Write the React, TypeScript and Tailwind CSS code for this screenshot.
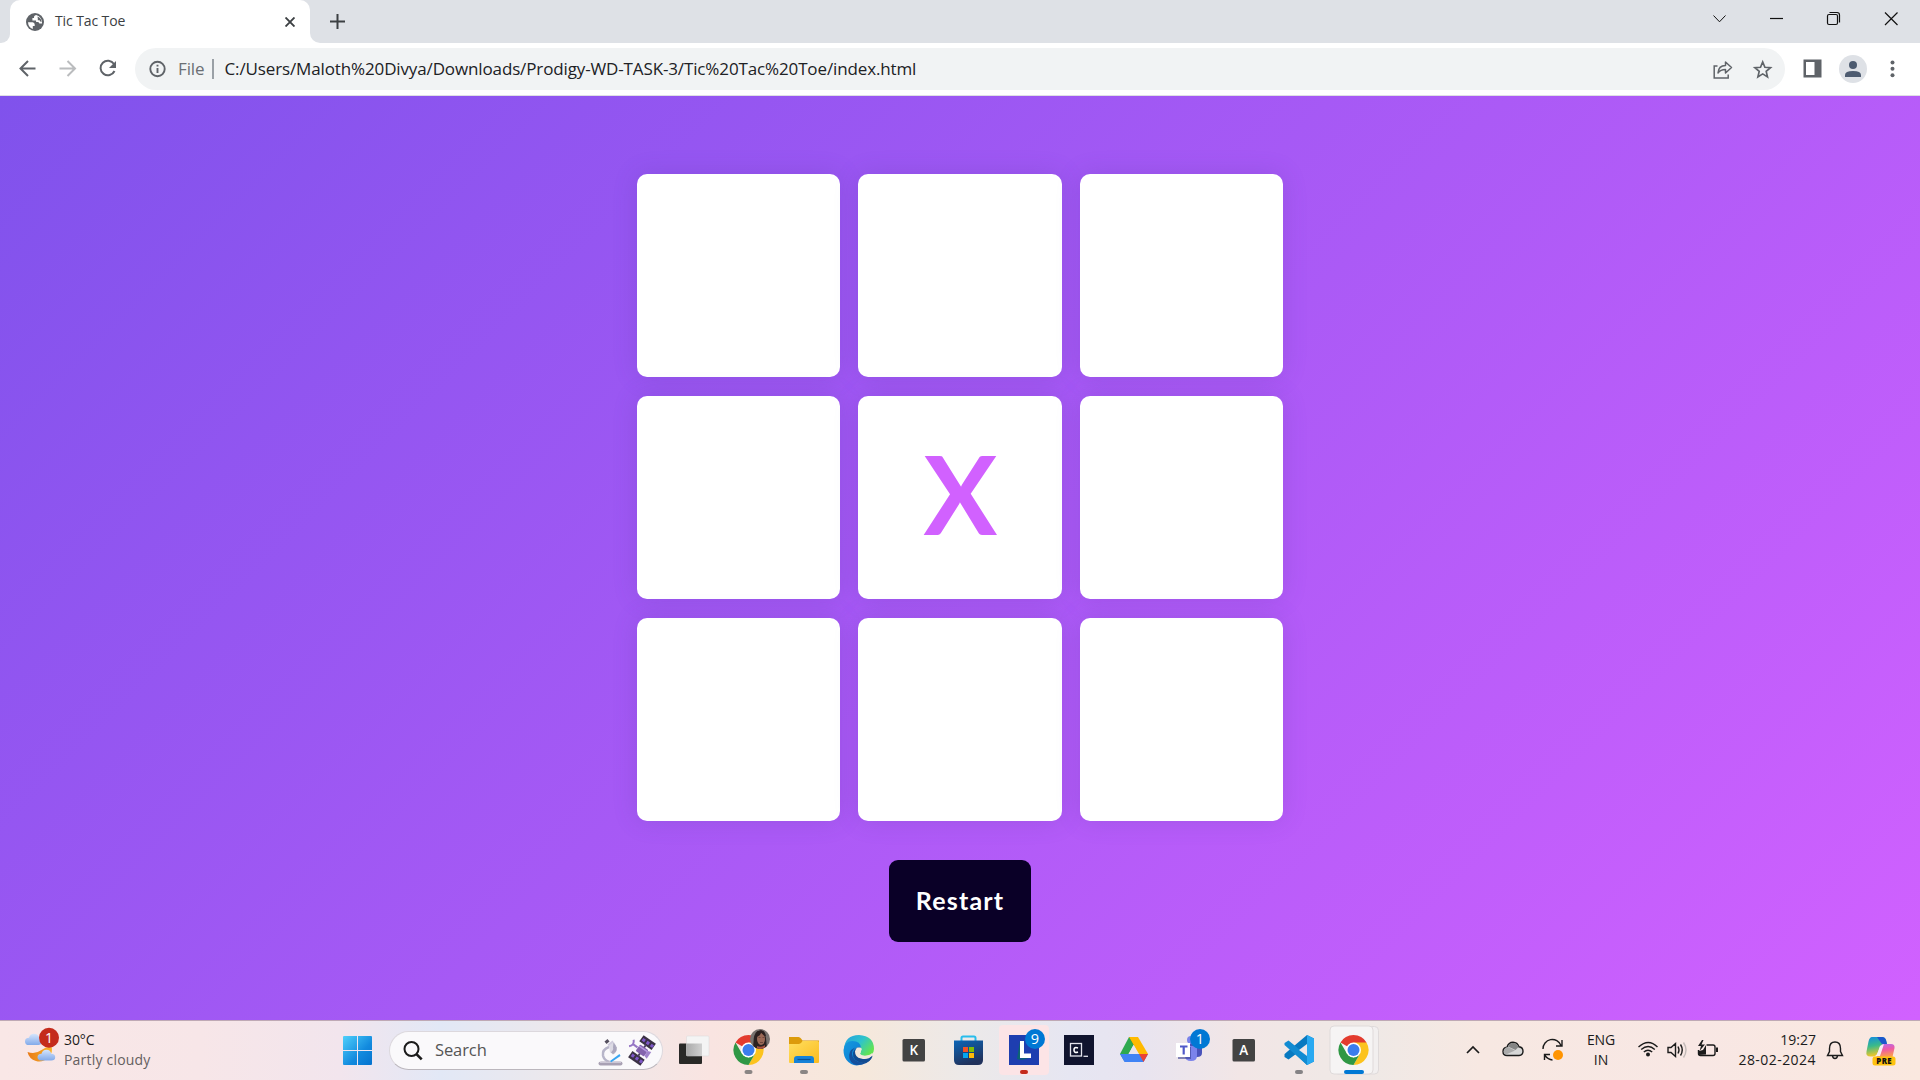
import React from "react";

const ui = "font-['Open_Sans','Noto_Sans',sans-serif]";

function Cell({ children }: { children?: React.ReactNode }) {
  return (
    <div className="flex items-center justify-center rounded-[10px] bg-white text-[#d161ff] shadow-[0_0_24px_rgba(84,56,160,0.2)]">
      {children}
    </div>
  );
}

function TabStrip() {
  return (
    <div className="flex h-[43px] bg-[#dee1e6]">
      <div className="flex w-[10px] bg-white">
        <div className="flex-1 rounded-br-[9px] bg-[#dee1e6]" />
      </div>
      <div className="flex w-[300px] bg-[#dee1e6]">
        <div className="flex w-full items-center rounded-t-[10px] bg-white pl-4 pr-[15px]">
          <svg width="18" height="18" viewBox="0 0 18 18">
            <circle cx="9" cy="9" r="9" fill="#5f6368" />
            <path d="M2 9.200h4.600q2.100.2 2.100 2.300v1.400H6.800V16Q2.300 14.200 2 9.200zM10.100 2q-2.700 1-2 3.100h-1.700v2.300h3.700v1.600h1.700q1.500 0 1.500 1.600h2.700Q16.500 4.200 10.100 2z" fill="#fff" />
            <path d="M11.500 3.500Q15.500 5 15.600 9q-1.600-.2-2-1.700h-1.800V5.400z" fill="#5f6368" />
          </svg>
          <span className="ml-[11px] flex-1 pb-[3px] text-[14px] tracking-[-0.1px] text-[#3c4043]">Tic Tac Toe</span>
          <svg width="10" height="10" viewBox="0 0 10 10" stroke="#3c4043" strokeWidth="1.900">
            <path d="M.5.5l9 9M9.500.5l-9 9" />
          </svg>
        </div>
      </div>
      <div className="flex w-5 bg-white">
        <div className="flex-1 rounded-bl-[10px] bg-[#dee1e6]" />
      </div>
      <svg width="16" height="43" viewBox="0 0 16 43" stroke="#3c4043" strokeWidth="2">
        <path d="M0 21.500h15M7.500 14v15" />
      </svg>
      <div className="flex-1" />
      <svg width="210" height="43" viewBox="0 0 210 43" fill="none" stroke="#111" strokeWidth="1.200">
        <path d="M3.500 15.500l6 6.300 6-6.300" strokeWidth="1" />
        <path d="M60 18.500h13" />
        <rect x="117.500" y="14.500" width="10" height="10" rx="1.500" />
        <path d="M119.500 12.500h7.500q2.500 0 2.500 2.500v7.500" />
        <path d="M175 12.500l12.500 12.500M187.500 12.500L175 25" />
      </svg>
    </div>
  );
}

function Toolbar() {
  return (
    <div className="flex h-[53px] items-center border-b border-[#dfdfe4] bg-white pb-px">
      <svg width="135" height="52" viewBox="0 0 135 52" fill="none" strokeWidth="2">
        <path d="M35.500 25.500H20.500M28 18l-7.500 7.500L28 33" stroke="#5f6368" />
        <path d="M59.500 25.500h15M67.500 18l7.500 7.500-7.500 7.500" stroke="#babcbe" />
        <path d="M114 21A7.300 7.300 0 1 0 114.500 28" stroke="#5f6368" />
        <path d="M116 18v7h-7z" fill="#5f6368" />
      </svg>
      <div className="flex h-[42px] w-[1650px] items-center rounded-full bg-[#f1f3f4]">
        <svg width="43" height="42" viewBox="0 0 43 42" fill="none" stroke="#5f6368" strokeWidth="1.900">
          <circle cx="22.500" cy="21" r="7.200" />
          <path d="M22.500 20v5M22.500 16.800v1.800" />
        </svg>
        <span className="w-[34px] text-[17px] tracking-[-0.1px] text-[#6b6f74]">File</span>
        <div className="h-5 w-[1.500px] bg-[#9aa0a6]" />
        <span className="ml-[11px] flex-1 whitespace-nowrap text-[17px] tracking-[-0.130px] text-[#202124]">
          C:/Users/Maloth%20Divya/Downloads/Prodigy-WD-TASK-3/Tic%20Tac%20Toe/index.html
        </span>
        <svg width="80" height="42" viewBox="-0.5 -0.5 80 42" fill="none" stroke="#5f6368" strokeWidth="1.500">
          <path d="M12 17.500H8.700V29.500h14V26" />
          <path d="M12.500 24.500q.5-7.500 7.500-7.500v-3.500l6 5.500-6 5.500v-3.400q-5 0-7.500 3.400z" strokeLinejoin="round" />
          <path d="M57.200 13.500l2.200 5.300 5.600.4-4.300 3.700 1.300 5.500-4.800-3-4.800 3 1.300-5.500-4.300-3.700 5.600-.4z" strokeWidth="1.700" />
        </svg>
      </div>
      <svg width="135" height="52" viewBox="0 0 135 52" fill="#5f6368">
        <path fillRule="evenodd" d="M18.500 16.500h18v18h-18zM21 19v13h8.500V19z" />
        <circle cx="68" cy="26" r="14" fill="#dee1e6" />
        <circle cx="68" cy="22" r="4" fill="#4d5b70" />
        <path d="M60 34v-2q0-4 8-4t8 4v2z" fill="#4d5b70" />
        <circle cx="107.500" cy="19.500" r="2" />
        <circle cx="107.500" cy="25.800" r="2" />
        <circle cx="107.500" cy="32.200" r="2" />
      </svg>
    </div>
  );
}

function AppIcon({ children }: { children: React.ReactNode }) {
  return (
    <svg width="55" height="59" viewBox="0 1 55 59" className="shrink-0">
      {children}
    </svg>
  );
}

function ChromeMark() {
  return (
    <g>
      <path d="M27.500 30L14.500 22.500A15 15 0 0 1 40.500 22.500z" fill="#e33b2e" />
      <path d="M27.500 30V22.500H40.500A15 15 0 0 1 27.500 45L34 33.700z" fill="#fcc31e" />
      <path d="M14.500 22.500L21 33.700 27.500 37.500 34 33.700 27.500 45A15 15 0 0 1 14.500 22.500z" fill="#2f9744" />
      <circle cx="27.500" cy="30" r="7.500" fill="#fff" />
      <circle cx="27.500" cy="30" r="6" fill="#3b7ded" />
    </g>
  );
}

function Letter({ c }: { c: string }) {
  return (
    <AppIcon>
      <rect x="16.500" y="19" width="22.500" height="22.500" rx="1.500" fill="#434343" />
      <text x="27.700" y="34.800" textAnchor="middle" fontSize="13.500" fontWeight="600" fill="#fff">
        {c}
      </text>
    </AppIcon>
  );
}

function Weather() {
  return (
    <svg width="64" height="59" viewBox="0 1 64 59">
      <defs>
        <linearGradient id="cl" x2="0" y2="1">
          <stop stopColor="#d5e5fc" />
          <stop offset="1" stopColor="#82aaea" />
        </linearGradient>
        <linearGradient id="moon" x2="1" y2="0">
          <stop stopColor="#e87a18" />
          <stop offset="1" stopColor="#f9b52c" />
        </linearGradient>
      </defs>
      <path d="M27.500 32q8 2.500 14-2 5-4 10-3.500 2 6-3 11-6 5.500-12.500 3.500-7-2-8.500-9z" fill="url(#moon)" />
      <path d="M29 25q-4 0-4-3.600 0-3.400 4-3.600 1-4 5-4 4.500 0 5.500 5 4 6.200-1 6.200z" fill="url(#cl)" />
      <path d="M41 40.500q-3.700-.5-3.500-3.800.5-3 4-3 1-4 5-4t4.700 4q4 .3 4 3.500t-4 3.300z" fill="url(#cl)" />
      <circle cx="49" cy="17.700" r="10" fill="#c42b1c" />
      <text x="49" y="22.700" textAnchor="middle" fontSize="14" fill="#fff">1</text>
    </svg>
  );
}

function SearchBox() {
  return (
    <div className="flex h-[39px] w-[274px] shrink-0 items-center rounded-full border border-[#dcd8dd] border-b-[#bbb7bd] bg-[#faf9fb]">
      <svg width="45" height="37" viewBox="0 0 45 37" fill="none" stroke="#1b1b1b" strokeWidth="2">
        <circle cx="21.500" cy="17" r="7" />
        <path d="M26.700 22.300l5 5" strokeWidth="2.600" />
      </svg>
      <span className="flex-1 text-[16.500px] tracking-[-0.1px] text-[#555]">Search</span>
      <svg width="66" height="37" viewBox="-1 -0.5 66 37">
        <path d="M12 14.500q-7 2.500-6 8.500 1 5 6.500 6.500" fill="none" stroke="#b7b5c9" strokeWidth="2.500" />
        <path d="M1.500 31q0-2 3-2h19q2 0 2 2t-2 2h-20q-2 0-2-2z" fill="#a9a1b4" />
        <path d="M3 29.700h21" stroke="#ded9e5" strokeWidth="1" />
        <path d="M13 28.500l9.500-7 1 2-9.300 6.300z" fill="#37a5f2" />
        <path d="M10.500 12l5-4 3.500 5-5 4z" fill="#cfcbdc" />
        <path d="M12 13l5-3.500 2.500 8.500q-3.500 3.500-6.500 2z" fill="#dcdae4" />
        <path d="M16.500 10l3.500 5q0 5-4 7l-2-2q3-3 2-5z" fill="#8f8ba8" opacity=".65" />
        <path d="M7.500 9l3-2.500 2 2.500-3 2.500z" fill="#55505f" />
        <g transform="rotate(35 45 18)">
          <rect x="37.500" y="4.500" width="15" height="7.500" fill="#3a3144" />
          <path d="M39 8.500h3m2 0h3m2 0h3" stroke="#7e58c8" strokeWidth="3.200" />
          <rect x="37.500" y="24" width="15" height="7.500" fill="#3a3144" />
          <path d="M39 27.500h3m2 0h3m2 0h3" stroke="#7e58c8" strokeWidth="3.200" />
          <path d="M44 11h2v14h-2z" fill="#4c3f63" />
          <rect x="40" y="14" width="10" height="8" rx="1" fill="#8464ad" />
          <path d="M40 16h10" stroke="#b79be0" strokeWidth="1.500" />
          <path d="M50 15l3.500-1v8l-3.500-1z" fill="#a184cc" />
          <path d="M39.500 18H34m-2-4q4 4 0 8" stroke="#9575c4" strokeWidth="2" fill="none" />
        </g>
      </svg>
    </div>
  );
}

function Apps() {
  return (
    <div className="ml-[3px] flex">
      <AppIcon>
        <defs>
          <linearGradient id="tv" x2="1"><stop stopColor="#aaa" /><stop offset="1" stopColor="#d0d0d0" /></linearGradient>
        </defs>
        <rect x="13" y="23.500" width="23" height="20.500" rx="1" fill="#292927" />
        <rect x="20.500" y="16" width="22.500" height="20" rx="1" fill="#f4f4f4" stroke="#d9d9d9" strokeWidth=".5" />
        <rect x="20.500" y="23.500" width="15.500" height="12.500" fill="url(#tv)" />
      </AppIcon>
      <AppIcon>
        <ChromeMark />
        <clipPath id="face"><circle cx="39" cy="19" r="10" /></clipPath>
        <g clipPath="url(#face)">
          <rect x="29" y="9" width="20" height="20" fill="#77716e" />
          <path d="M32.500 29q-1-15 4-18 7-1 8.500 7l1 11z" fill="#2b2121" />
          <ellipse cx="40" cy="19" rx="4" ry="6" fill="#9b6957" />
          <path d="M35 17q5-1 5-5 2 4 5 4-1-5-5-6-5 1-5 7z" fill="#2c2020" />
          <path d="M36 26q4 2 8-1v4h-8z" fill="#a65343" />
          <path d="M37.500 17.500h2m2 0h2M39 22.500h3" stroke="#6d473d" />
        </g>
        <rect x="23.500" y="50" width="8" height="4" rx="2" fill="#8a8584" />
      </AppIcon>
      <AppIcon>
        <defs>
          <linearGradient id="fo" x2="1" y2="1"><stop stopColor="#ffdf60" /><stop offset="1" stopColor="#fbbb1e" /></linearGradient>
        </defs>
        <path d="M13 17h9.500q1.500 0 2.500 1.500l1.500 2H43V28H13z" fill="#dc9b0b" />
        <path d="M13 24h10q2 0 3.500-3h15q1.500 0 1.500 1.500v19.500q0 1-1 1H14q-1 0-1-1z" fill="url(#fo)" />
        <path d="M18 43v-4q0-3 3-3h14q3 0 3 3v4z" fill="#1682d8" />
        <path d="M21.500 39.500h13" stroke="#0c5295" strokeWidth="1.200" />
        <rect x="24" y="50" width="8" height="4" rx="2" fill="#8a8584" />
      </AppIcon>
      <AppIcon>
        <defs>
          <linearGradient id="e1" x2="1" y2=".6"><stop stopColor="#239fe0" /><stop offset=".55" stopColor="#2fc3cc" /><stop offset="1" stopColor="#62e451" /></linearGradient>
          <linearGradient id="e2" y2="1"><stop stopColor="#1599df" /><stop offset="1" stopColor="#0a75cf" /></linearGradient>
        </defs>
        <path d="M13 29Q14 15 28 15q15 1 15 14 0 7-9 7-5 0-5-2.500 1-.5 1-3Q29 24 22 23q-6 0-9 6z" fill="url(#e1)" />
        <path d="M12.500 30q1-9 9-9 8 0 8.500 7-4-2-5.500 1-3 8 4 12 4 3 6 2-12 6-19-3-3-4-3-10z" fill="url(#e2)" />
        <path d="M24 27.500q-6 6 0 12.500 8 6 17-2-5 7-14 7-6 0-8.500-6-2-8 5.500-11.500z" fill="#14509d" />
        <path d="M30 27.500q-5-1-6 4 0 6 6 7 7 2 11-3 1 1-1 3.500-3 4-8 4-11-2-10-10 2-7 8-5.500z" fill="#124b91" />
        <path d="M29 34q3 3 9 1 2-.7 3-2v3q-4 3-9 2-6-1-7-5 0-5 4-5.500 3 1 1 3.500-1 1-1 3z" fill="#f1e6dc" />
      </AppIcon>
      <Letter c="K" />
      <AppIcon>
        <defs>
          <linearGradient id="st" x2=".4" y2="1"><stop stopColor="#0b65b7" /><stop offset="1" stopColor="#20325c" /></linearGradient>
        </defs>
        <path d="M20.500 21v-3q0-1.500 1.500-1.500h11q1.500 0 1.500 1.500v3" fill="none" stroke="#27bdec" strokeWidth="2" />
        <path d="M13 20.500h29V40q0 5-5 5H18q-5 0-5-5z" fill="url(#st)" />
        <rect x="22" y="27" width="5" height="5" fill="#f35325" />
        <rect x="28" y="27" width="5" height="5" fill="#81bc06" />
        <rect x="22" y="33" width="5" height="5" fill="#05a6f0" />
        <rect x="28" y="33" width="5" height="5" fill="#ffba08" />
      </AppIcon>
      <AppIcon>
        <rect x="3" y="5" width="50" height="50" rx="4" fill="#fce4e6" />
        <rect x="13" y="15" width="30" height="30" fill="#1e3eb0" />
        <path d="M21 39l3-18v18l9-3v2l-8 2z" fill="#0b6473" />
        <path d="M24 21h4v12.500h7v4.500H24z" fill="#fff" />
        <circle cx="39" cy="19" r="10" fill="#0078d4" />
        <text x="39" y="24" textAnchor="middle" fontSize="14.500" fill="#fff">9</text>
        <rect x="24" y="50" width="8" height="4" rx="2" fill="#c42b1c" />
      </AppIcon>
      <AppIcon>
        <rect x="13" y="15" width="30" height="30" fill="#10142e" />
        <rect x="19.500" y="23.500" width="11" height="12.500" fill="none" stroke="#e3e3ec" strokeWidth="1.300" />
        <path d="M27 28q-4-1.500-4 2t4 2" fill="none" stroke="#fff" strokeWidth="1.600" />
        <path d="M32.500 36.300h4.500" stroke="#e3e3ec" strokeWidth="1.300" />
      </AppIcon>
      <AppIcon>
        <path d="M23 17h9L18.500 41.500 14 34z" fill="#2da94f" />
        <path d="M23 17h9l-4.500 8z" fill="#188038" />
        <path d="M23 17h9l10 17h-9z" fill="#ffba00" />
        <path d="M27.500 25l5 9h-10z" fill="#e7e4f0" />
        <path d="M14 34h28l-4.500 8h-19z" fill="#4083f5" />
        <path d="M33 34h9l-4.500 8z" fill="#ea4335" />
      </AppIcon>
      <AppIcon>
        <path d="M28 20h13v13q0 4-5 4h-5z" fill="#4a53bb" />
        <path d="M24 26h12v10q0 5-6 5t-6-5z" fill="#7b83eb" />
        <circle cx="30" cy="20" r="4" fill="#7b83eb" />
        <path d="M17 38h12V27" fill="none" stroke="#383f91" strokeWidth="2" opacity=".6" />
        <rect x="15" y="23" width="14" height="14" fill="#fff" />
        <path d="M19 26.500h7.500M22.700 26.500v8" stroke="#5059c9" strokeWidth="2.200" />
        <circle cx="39" cy="19" r="10" fill="#0078d4" />
        <text x="39" y="24" textAnchor="middle" fontSize="14.500" fill="#fff">1</text>
      </AppIcon>
      <Letter c="A" />
      <AppIcon>
        <path d="M36 15l7 3.500v23L36 45 25 34l-7.500 5.500-4-2.500V34L36 15z" fill="#0879c0" />
        <path d="M13.500 23l4-2.500L36 35.500V45L13.500 25z" fill="#118bd2" />
        <path d="M36 24v12l-8-6z" fill="#eee8ea" />
        <path d="M13.500 26l3.500 4-3.500 4z" fill="#eee8ea" />
        <path d="M36 15l7 3.500v23L36 45z" fill="#29a9f1" />
        <rect x="24" y="50" width="8" height="4" rx="2" fill="#858386" />
      </AppIcon>
      <AppIcon>
        <rect x="8" y="6.500" width="44.500" height="47.500" rx="4" fill="#f2efef" stroke="#dfdada" />
        <rect x="4" y="6" width="43" height="48" rx="4" fill="#f6f4f4" stroke="#dfdada" />
        <ChromeMark />
        <rect x="18" y="50" width="20" height="4" rx="2" fill="#0078d4" />
      </AppIcon>
    </div>
  );
}

function Tray() {
  return (
    <>
      <svg width="113" height="59" viewBox="0 1 113 59" fill="none" stroke="#1b1b1b" strokeWidth="1.400">
        <path d="M7 33l6-6 6 6" strokeWidth="1.700" />
        <path d="M47 35.500q-4 0-4-4 0-3.500 4-4.200 1.500-5 6-5 4.500.2 6 4.500 4 .5 4 4.500t-4 4.200z" fill="#d7d7d7" />
        <path d="M44 30q1-3 4-3l7 3.500-9 4q-3-1-2-4.500z" fill="#aaa" stroke="none" />
        <path d="M48 26.500q1.500-3.500 5-3.500 4 0 5.500 4l-3 3z" fill="#858585" stroke="none" />
        <path d="M83 29A9.300 9.300 0 0 1 101 25.500M102 20v6h-6M84.500 40v-5.500h5.500M85 35.500q3 4 7.500 4.500" />
        <circle cx="98" cy="35" r="5" fill="#ff9400" stroke="none" />
      </svg>
      <div className="w-[56px] pb-px text-center text-[14px] leading-5 tracking-[-0.1px] text-[#1b1b1b]">
        <div>ENG</div>
        <div>IN</div>
      </div>
      <svg width="95" height="59" viewBox="-0.5 1 95 59" fill="none" stroke="#1b1b1b" strokeWidth="1.400">
        <path d="M9 27q10-9 19 0M11.700 29.500q7-6 13.600 0M14.300 32q4.200-3.500 8.400 0" />
        <circle cx="18.500" cy="34.500" r="2" fill="#1b1b1b" stroke="none" />
        <path d="M38.500 27.500h3l4.500-4v13l-4.500-4h-3zM48.500 26.500q2 3.500 0 7M51 24.500q3.500 5.500 0 11" />
        <path d="M54 22.500q5 7.500 0 15" stroke="#c3bab8" />
        <path d="M77 25h6.500q2 0 2 2v6.500q0 2-2 2H71q-2 0-2-2V30" />
        <path d="M87.500 27.500v4.500" strokeWidth="2" />
        <path d="M69.500 35V31l4-1 3-5v9.500z" fill="#1b1b1b" stroke="none" />
        <path d="M72.500 20l-4 6h3l-1.500 5 5.500-6.500h-3.500l2-4.500z" fill="#1b1b1b" stroke="none" />
      </svg>
      <div className="flex w-[92px] flex-col items-end whitespace-nowrap pb-[2px] text-[14px] leading-5 text-[#1b1b1b]">
        <div>19:27</div>
        <div className="tracking-[0.450px]">28-02-2024</div>
      </div>
      <svg width="104" height="59" viewBox="0 1 104 59" fill="none">
        <path d="M11.500 35.500l2-4v-3q0-6.500 5.500-6.500t5.500 6.500v3l2 4zM16.500 36q.5 2.500 2.500 2.500t2.500-2.500" stroke="#1b1b1b" strokeWidth="1.400" />
        <defs>
          <linearGradient id="cp1" x2=".2" y2="1"><stop stopColor="#138ce0" /><stop offset=".5" stopColor="#3aba8a" /><stop offset="1" stopColor="#f1c728" /></linearGradient>
          <linearGradient id="cp2" x2=".2" y2="1"><stop stopColor="#b16df2" /><stop offset=".5" stopColor="#ee5aa4" /><stop offset="1" stopColor="#fa9a52" /></linearGradient>
        </defs>
        <path d="M56 17h10q3 0 4 3l1 4h-3q-3 0-4.500 4l-2 5q-1 3.500-4 3.500h-3q-5 0-4-5l2-10q1-4.500 3.500-4.500z" fill="url(#cp1)" />
        <path d="M61 17h5q3 0 4 3l1 4h-4q-2 0-2.500-2z" fill="#1b57cc" />
        <path d="M67 24h8q4 0 3.500 4l-2 9H60q2-1 3-4l2-6q.7-3 2-3z" fill="url(#cp2)" />
        <path d="M64 26l4-2-4 12h-5q2-1 3-4z" fill="#f6eef4" />
        <rect x="56.500" y="36.500" width="23" height="9" rx="2.500" fill="#fec20f" />
        <text x="68.200" y="43.900" textAnchor="middle" fontSize="7.800" fontWeight="800" letterSpacing=".4" fill="#111">PRE</text>
      </svg>
    </>
  );
}

function Taskbar() {
  return (
    <div className="flex h-[60px] items-center border-t border-[#bfa9b5] bg-[linear-gradient(90deg,#f9e7e6_0px,#f7e6e8_200px,#f2e5ed_340px,#e2e8f6_440px,#eee8ea_580px,#f9e4e1_710px,#f6e8db_860px,#ece9e9_970px,#e6e6f2_1070px,#e8e4f0_1140px,#f2e6e6_1240px,#efe9e6_1370px,#f7e8e2_1480px,#f8e7e4_1700px,#fae8df_1920px)]">
      <Weather />
      <div className="w-[279px] pb-[2px] text-[14px] leading-5">
        <div className="tracking-[-0.1px] text-[#1b1b1b]">30°C</div>
        <div className="tracking-[0.2px] text-[#65605f]">Partly cloudy</div>
      </div>
      <svg width="46" height="59" viewBox="0 1 46 59">
        <defs>
          <linearGradient id="win" gradientUnits="userSpaceOnUse" x1="0" y1="16" x2="29" y2="45">
            <stop stopColor="#4fd0fb" />
            <stop offset=".6" stopColor="#128ade" />
            <stop offset="1" stopColor="#0572ce" />
          </linearGradient>
        </defs>
        <path d="M1 16h13v14H0V17q0-1 1-1zM15 16h13q1 0 1 1v13H15zM0 31h14v14H1q-1 0-1-1zM15 31h14v13q0 1-1 1H15z" fill="url(#win)" />
      </svg>
      <SearchBox />
      <Apps />
      <div className="flex-1" />
      <Tray />
    </div>
  );
}

export default function App() {
  return (
    <div className={`flex h-[1080px] w-[1920px] flex-col overflow-hidden ${ui}`}>
      <TabStrip />
      <Toolbar />
      <main className="flex flex-1 flex-col items-center bg-[linear-gradient(135deg,#8052ec,#d161ff)] pt-[78px]">
        <div className="grid h-[647px] w-[647px] grid-cols-3 grid-rows-3 gap-[18.500px]">
          <Cell />
          <Cell />
          <Cell />
          <Cell />
          <Cell>
            <span className="mb-[10px] ml-px font-['Lato',sans-serif] text-[110px] font-bold leading-none">X</span>
          </Cell>
          <Cell />
          <Cell />
          <Cell />
          <Cell />
        </div>
        <button className="mt-[39px] h-[82px] w-[142px] rounded-[9px] bg-[#0a0027] pb-px font-['Lato',sans-serif] text-[25px] font-bold tracking-[1.200px] text-white">
          Restart
        </button>
      </main>
      <Taskbar />
    </div>
  );
}
